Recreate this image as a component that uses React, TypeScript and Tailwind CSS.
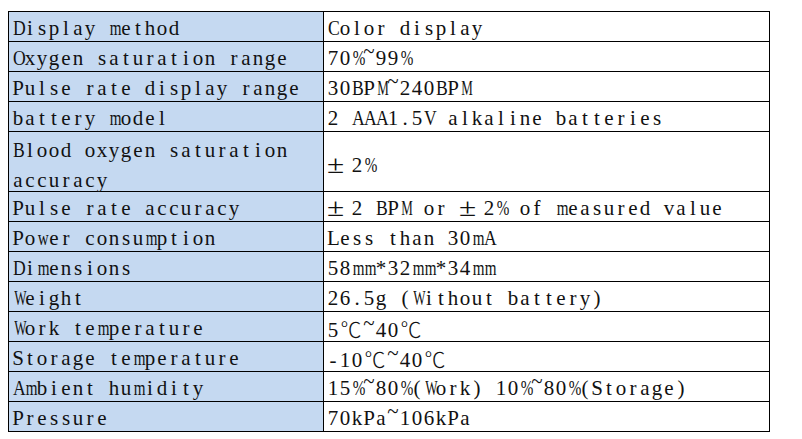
import React from "react";

const XWIDE = new Set("MW".split(""));
const WIDE = new Set("mw%".split(""));
const CAP = new Set("ABCDEGHKNOQRUVXYZ".split(""));

function cls(ch: string) {
  if (ch === "±") {
    return "inline-block w-[24px] text-left align-top text-[25px] leading-[22px] scale-x-[1.25] origin-left";
  }
  if (ch === "℃") {
    return "inline-block w-[24px] text-center font-['Noto_Sans_CJK_SC',sans-serif] font-light text-[21px]";
  }
  let c = "inline-block w-[12px] text-center";
  if (ch === "~") c += " -translate-y-[7px]";
  else if (XWIDE.has(ch)) c += " scale-x-[0.62]";
  else if (WIDE.has(ch)) c += " scale-x-[0.72]";
  else if (CAP.has(ch)) c += " scale-x-[0.84]";
  return c;
}

function M({ s }: { s: string }) {
  return (
    <>
      {Array.from(s).map((ch, i) => (
        <span key={i} className={cls(ch)}>
          {ch}
        </span>
      ))}
    </>
  );
}

type Row = { k: string[]; v: string; tall?: boolean };

const rows: Row[] = [
  { k: ["Display method"], v: "Color display" },
  { k: ["Oxygen saturation range"], v: "70%~99%" },
  { k: ["Pulse rate display range"], v: "30BPM~240BPM" },
  { k: ["battery model"], v: "2 AAA1.5V alkaline batteries" },
  { k: ["Blood oxygen saturation", "accuracy"], v: "±2%", tall: true },
  { k: ["Pulse rate accuracy"], v: "±2 BPM or ±2% of measured value" },
  { k: ["Power consumption"], v: "Less than 30mA" },
  { k: ["Dimensions"], v: "58mm*32mm*34mm" },
  { k: ["Weight"], v: "26.5g (Without battery)" },
  { k: ["Work temperature"], v: "5℃~40℃" },
  { k: ["Storage temperature"], v: "-10℃~40℃" },
  { k: ["Ambient humidity"], v: "15%~80%(Work) 10%~80%(Storage)" },
  { k: ["Pressure"], v: "70kPa~106kPa" },
];

export default function App() {
  return (
    <div className="w-[802px] h-[439px] bg-white pt-[11px] pl-[8px]">
      <div className="w-[762px] border-l border-t border-black text-[21px] text-[#111] whitespace-pre font-['Liberation_Serif','DejaVu_Serif','Noto_Sans_CJK_SC',serif]">
        {rows.map((r, i) => (
          <div key={i} className={`flex ${r.tall ? "h-[60px]" : "h-[30px]"}`}>
            <div
              className={`w-[315px] shrink-0 bg-[#c5d9f1] border-r border-b border-black pl-[3px] ${
                r.tall ? "pt-[3px] leading-[30px]" : "pt-[5px] leading-[22px]"
              }`}
            >
              {r.k.map((line, j) => (
                <div key={j}>
                  <M s={line} />
                </div>
              ))}
            </div>
            <div
              className={`w-[446px] shrink-0 bg-white border-r border-b border-black pl-[3px] leading-[22px] ${
                r.tall ? "pt-[22px]" : "pt-[5px]"
              }`}
            >
              <M s={r.v} />
            </div>
          </div>
        ))}
      </div>
    </div>
  );
}
